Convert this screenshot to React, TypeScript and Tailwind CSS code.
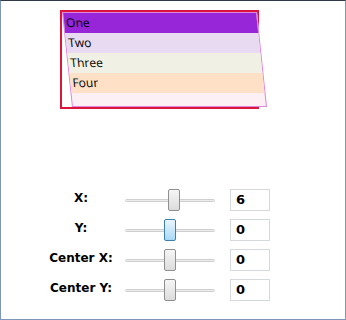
import React from 'react';

interface Row {
  label: string;
  value: number;
  pos: number; // thumb left offset in px inside the slider
  active?: boolean;
}

const items = [
  { text: 'One', bg: 'bg-[#9626d8]' },
  { text: 'Two', bg: 'bg-[#e8daf0]' },
  { text: 'Three', bg: 'bg-[#f1f0e5]' },
  { text: 'Four', bg: 'bg-[#fde0c6]' },
];

const rows: Row[] = [
  { label: 'X:', value: 6, pos: 43 },
  { label: 'Y:', value: 0, pos: 39, active: true },
  { label: 'Center X:', value: 0, pos: 39 },
  { label: 'Center Y:', value: 0, pos: 39 },
];

const Slider: React.FC<{ pos: number; active?: boolean }> = ({ pos, active }) => (
  <div className="relative w-[90px] h-[22px] flex items-center">
    <div className="w-full h-[3px] rounded-full bg-[#ececec] border border-[#cfcfcf]" />
    <div
      className={
        active
          ? 'absolute top-0 w-[12px] h-[22px] rounded-[2px] border border-[#3c7fb1] bg-gradient-to-b from-[#eaf6fd] to-[#a7d9f5]'
          : 'absolute top-0 w-[12px] h-[22px] rounded-[2px] border border-[#8e8f8f] bg-gradient-to-b from-[#f6f6f6] to-[#dcdcdc]'
      }
      style={{ left: pos }}
    />
  </div>
);

export default function App() {
  return (
    <div className="w-[346px] h-[320px] bg-white border-x border-b border-[#7d97b8] border-t border-t-[#2f3a46] flex flex-col">
      <div className="ml-[59px] mt-[9px] w-[199px] h-[99px] border-2 border-[#dc143c]">
        <div className="w-full h-full origin-top-left skew-x-6 border border-[#dd88dd] bg-[#fdf0f4] flex flex-col font-['Open_Sans',sans-serif] text-[12px] text-black">
          {items.map((it) => (
            <div key={it.text} className={`h-[20px] flex items-center pl-[2px] ${it.bg}`}>
              {it.text}
            </div>
          ))}
        </div>
      </div>

      <div className="mt-[80px] flex flex-col gap-[8px] font-['DejaVu_Sans',sans-serif] text-[12px] font-bold text-black">
        {rows.map((r) => (
          <div key={r.label} className="flex items-center h-[22px]">
            <div className="w-[80px] ml-[40px] text-center -mt-[5px]">{r.label}</div>
            <div className="ml-[4px]">
              <Slider pos={r.pos} active={r.active} />
            </div>
            <div className="ml-[15px] w-[40px] h-[22px] border border-[#d5d9df] flex items-center pl-[5px] text-[13px]">
              {r.value}
            </div>
          </div>
        ))}
      </div>
    </div>
  );
}
